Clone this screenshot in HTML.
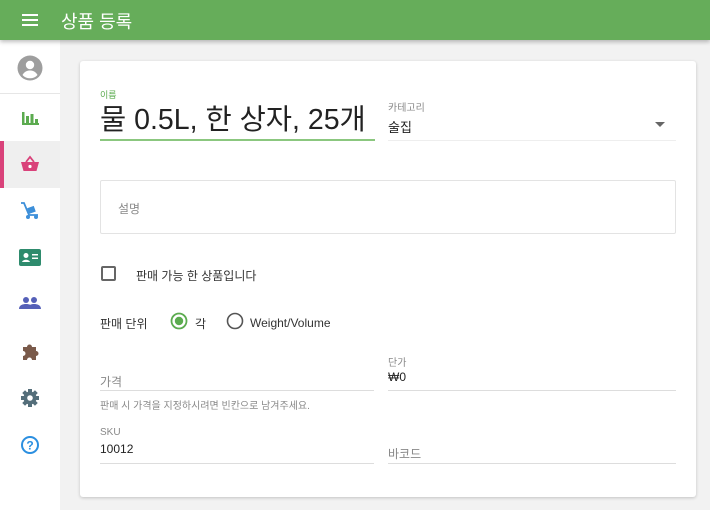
<!DOCTYPE html>
<html><head><meta charset="utf-8"><style>
*{box-sizing:border-box;margin:0;padding:0}
body{width:710px;height:510px;overflow:hidden;background:#f2f2f2;font-family:"Liberation Sans","Noto Sans CJK KR",sans-serif;position:relative}
.hdr{position:absolute;left:0;top:0;width:710px;height:40px;background:#66ad5a;box-shadow:0 2px 4px rgba(0,0,0,.25);z-index:2}
.hdr .t{position:absolute;left:61px;top:8px;color:#fff;font-size:18px}
.side{position:absolute;left:0;top:40px;width:60px;height:470px;background:#fff}
.ic{position:absolute;left:0;width:60px;height:46px;display:flex;align-items:center;justify-content:center}
.card{position:absolute;left:80px;top:61px;width:616px;height:436px;background:#fff;border-radius:3px;box-shadow:0 1px 3px rgba(0,0,0,.2)}
.a{position:absolute;white-space:nowrap}
.lbl{font-size:10px;color:#888}
.line{position:absolute;height:1px;background:#ddd}
.v{font-size:13px;color:#222}
</style></head><body>
<div class="hdr">
<svg style="position:absolute;left:22px;top:13px" width="16" height="14"><rect y="1" width="16" height="2" fill="#fff"/><rect y="6" width="16" height="2" fill="#fff"/><rect y="11" width="16" height="2" fill="#fff"/></svg>
<div class="t">상품 등록</div></div>
<div class="side">
<div class="ic" style="top:5px"><svg width="26" height="26" viewBox="0 0 26 26"><circle cx="13" cy="13" r="12.5" fill="#9e9e9e"/><circle cx="13" cy="10" r="4.2" fill="#fff"/><path d="M5.5 20c2-3.5 4.5-4.5 7.5-4.5s5.5 1 7.5 4.5c-2 2.2-4.5 3.3-7.5 3.3s-5.5-1.1-7.5-3.3z" fill="#fff"/></svg></div>
<div style="position:absolute;left:0;top:53px;width:60px;height:1px;background:#e6e6e6"></div>
<div class="ic" style="top:55px"><svg width="18" height="16"><rect x="1" y="2" width="2.5" height="13" fill="#5bab4f"/><rect x="5" y="6" width="3" height="9" fill="#5bab4f"/><rect x="9.5" y="4" width="3" height="11" fill="#5bab4f"/><rect x="14" y="9" width="3" height="6" fill="#5bab4f"/><rect x="1" y="13" width="17" height="2" fill="#5bab4f"/></svg></div>
<div style="position:absolute;left:0;top:101px;width:60px;height:47px;background:#efefef"></div>
<div style="position:absolute;left:0;top:101px;width:4px;height:47px;background:#d9427a"></div>
<div class="ic" style="top:101px"><svg width="20" height="18" viewBox="0 0 20 18"><path d="M6 7L10 2L14 7" fill="none" stroke="#d9427a" stroke-width="1.8"/><path d="M1 7h18l-2.5 9h-13z" fill="#d9427a"/><circle cx="10" cy="11.5" r="1.6" fill="#fff"/></svg></div>
<div class="ic" style="top:148px"><svg width="22" height="20" viewBox="0 0 22 20"><path d="M2 2h3l5 12h9" fill="none" stroke="#3d8fd9" stroke-width="1.8"/><rect x="9" y="6" width="7" height="6" fill="#3d8fd9" transform="rotate(-20 12 9)"/><circle cx="9" cy="16" r="2" fill="#3d8fd9"/><circle cx="17" cy="16" r="2" fill="#3d8fd9"/></svg></div>
<div class="ic" style="top:194px"><svg width="22" height="17"><rect width="22" height="17" rx="2" fill="#2e8b6d"/><circle cx="7" cy="6.5" r="2.5" fill="#fff"/><path d="M3 13c1-3 7-3 8 0z" fill="#fff"/><rect x="13" y="5" width="6" height="1.5" fill="#fff"/><rect x="13" y="8.5" width="6" height="1.5" fill="#fff"/></svg></div>
<div class="ic" style="top:240px"><svg width="22" height="14"><circle cx="7" cy="4" r="3" fill="#5560b8"/><circle cx="15" cy="4" r="3" fill="#5560b8"/><path d="M0 13c0-4 4-5 7-5s7 1 7 5zM9 13c0-4 3-5 6-5s7 1 7 5z" fill="#5560b8"/></svg></div>
<div class="ic" style="top:288px"><svg width="20" height="20" viewBox="0 0 20 20"><path d="M3 6h4a2.5 2.5 0 1 1 5 0h4v4a2.5 2.5 0 1 1 0 5v4h-4a2.5 2.5 0 1 0-5 0H3v-4a2.5 2.5 0 1 0 0-5z" fill="#7a5a4a"/></svg></div>
<div class="ic" style="top:335px"><svg width="20" height="20" viewBox="0 0 20 20"><g fill="#546e7a"><circle cx="10" cy="10" r="6.5"/><rect x="8" y="1" width="4" height="18"/><rect x="1" y="8" width="18" height="4"/><rect x="8" y="1" width="4" height="18" transform="rotate(45 10 10)"/><rect x="8" y="1" width="4" height="18" transform="rotate(-45 10 10)"/></g><circle cx="10" cy="10" r="2.8" fill="#fff"/></svg></div>
<div class="ic" style="top:382px"><svg width="20" height="20"><circle cx="10" cy="10" r="8" fill="none" stroke="#2b8fe0" stroke-width="2"/><text x="10" y="14.5" text-anchor="middle" font-size="12" font-weight="bold" fill="#2b8fe0" font-family="Liberation Sans">?</text></svg></div>
</div>
<div class="card">
<div class="a" style="left:20px;top:27px;font-size:9px;color:#5bab4f">이름</div>
<div class="a" style="left:20px;top:36px;font-size:28.5px;color:#222">물 0.5L, 한 상자, 25개</div>
<div class="line" style="left:20px;top:78px;width:275px;height:2px;background:#8bc77f"></div>
<div class="a lbl" style="left:308px;top:38px">카테고리</div>
<div class="a v" style="left:308px;top:56px">술집</div>
<svg style="position:absolute;left:575px;top:61px" width="10" height="5"><path d="M0 0h10L5 5z" fill="#666"/></svg>
<div class="line" style="left:308px;top:79px;width:288px;background:#eee"></div>
<div style="position:absolute;left:20px;top:119px;width:576px;height:54px;border:1px solid #e3e3e3;border-radius:2px"></div>
<div class="a" style="left:38px;top:139px;font-size:12px;color:#888">설명</div>
<div style="position:absolute;left:21px;top:205px;width:15px;height:15px;border:2px solid #666;border-radius:2px"></div>
<div class="a" style="left:56px;top:206px;font-size:12px;color:#333">판매 가능 한 상품입니다</div>
<div class="a" style="left:20px;top:254px;font-size:12px;color:#333">판매 단위</div>
<svg style="position:absolute;left:90px;top:251px" width="18" height="18"><circle cx="9" cy="9" r="7.5" fill="none" stroke="#5bab4f" stroke-width="1.8"/><circle cx="9" cy="9" r="4.2" fill="#5bab4f"/></svg>
<div class="a" style="left:115px;top:254px;font-size:12px;color:#333">각</div>
<svg style="position:absolute;left:146px;top:251px" width="18" height="18"><circle cx="9" cy="9" r="7.5" fill="none" stroke="#555" stroke-width="1.6"/></svg>
<div class="a" style="left:170px;top:255px;font-size:12px;color:#333">Weight/Volume</div>
<div class="a" style="left:20px;top:312px;font-size:12px;color:#888">가격</div>
<div class="line" style="left:20px;top:329px;width:274px"></div>
<div class="a" style="left:20px;top:336px;font-size:10px;color:#888">판매 시 가격을 지정하시려면 빈칸으로 남겨주세요.</div>
<div class="a lbl" style="left:308px;top:293px">단가</div>
<div class="a" style="left:308px;top:309px;font-size:12px;color:#222">₩0</div>
<div class="line" style="left:308px;top:329px;width:288px"></div>
<div class="a lbl" style="left:20px;top:366px">SKU</div>
<div class="a" style="left:20px;top:381px;font-size:12px;color:#222">10012</div>
<div class="line" style="left:20px;top:402px;width:274px"></div>
<div class="a" style="left:308px;top:384px;font-size:12px;color:#888">바코드</div>
<div class="line" style="left:308px;top:402px;width:288px"></div>
</div>
</body></html>
